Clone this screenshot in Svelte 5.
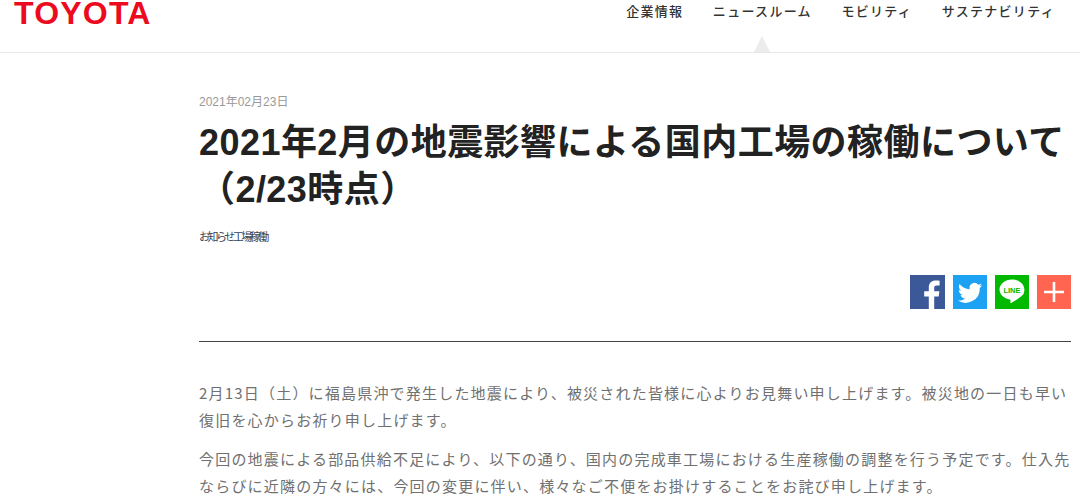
<script lang="ts">
  const nav = [
    { label: "企業情報" },
    { label: "ニュースルーム", active: true },
    { label: "モビリティ" },
    { label: "サステナビリティ" },
  ];
</script>

<header class="top">
  <div class="logo">TOYOTA</div>
  <nav>
    {#each nav as n}
      <a class:active={n.active} href="#top">{n.label}</a>
    {/each}
  </nav>
</header>

<main>
  <div class="date">2021年02月23日</div>
  <h1>2021年2月の地震影響による国内工場の稼働について（2/23時点）</h1>
  <div class="tags">お知らせ工場稼働</div>

  <div class="share">
    <span class="btn fb">
      <svg viewBox="0 0 35 35" width="35" height="35"><path fill="#fff" d="M24.2 35V21.6h4.5l.7-5.3h-5.200v-3.300c0-1.500.4-2.600 2.600-2.600h2.800V5.700c-.5-.1-2.100-.2-4-.2-4 0-6.800 2.500-6.800 7v3.800h-4.600v5.300h4.600V35z"/></svg>
    </span>
    <span class="btn tw">
      <svg viewBox="0 0 24 24" width="34" height="34"><path fill="#fff" d="M20.500 7.300c-.6.300-1.300.5-2 .6.700-.4 1.300-1.100 1.500-1.900-.7.400-1.400.7-2.200.8a3.500 3.500 0 0 0-6 3.200c-2.900-.1-5.500-1.500-7.200-3.700-.9 1.600-.5 3.600 1.100 4.700-.6 0-1.100-.2-1.600-.4 0 1.700 1.200 3.100 2.800 3.500-.5.100-1 .1-1.600 0 .4 1.400 1.700 2.400 3.300 2.400A7 7 0 0 1 3.500 18a10 10 0 0 0 15.400-8.900c.6-.5 1.200-1.100 1.600-1.800z"/></svg>
    </span>
    <span class="btn ln">
      <svg viewBox="0 0 34 34" width="34" height="34">
        <path fill="#fff" d="M17 4.500c-6.900 0-12.500 4.500-12.500 10.100 0 5 4.500 9.200 10.400 10 .9.200.5 1.600.4 2.500-.1.800.5 1 1.300.6 2.800-1.500 9.900-5.700 11.900-8.600.6-1.400.9-2.900.9-4.500 0-5.600-5.600-10.100-12.400-10.100z"/>
        <text x="17" y="17.500" text-anchor="middle" class="line-word">LINE</text>
      </svg>
    </span>
    <span class="btn plus">
      <svg viewBox="0 0 34 34" width="34" height="34"><path fill="none" stroke="#fff" stroke-width="2.600" d="M17 7v20M7 17h20"/></svg>
    </span>
  </div>

  <hr />

  <p>2月13日（土）に福島県沖で発生した地震により、被災された皆様に心よりお見舞い申し上げます。被災地の一日も早い復旧を心からお祈り申し上げます。</p>
  <p>今回の地震による部品供給不足により、以下の通り、国内の完成車工場における生産稼働の調整を行う予定です。仕入先ならびに近隣の方々には、今回の変更に伴い、様々なご不便をお掛けすることをお詫び申し上げます。</p>
</main>

<style>
  :global(body) {
    margin: 0;
    background: #fff;
    font-family: "Noto Sans CJK JP", "Liberation Sans", sans-serif;
    color: #222;
    overflow: hidden;
  }

  /* header */
  .top {
    position: relative;
    height: 52px;
    border-bottom: 1px solid #e8e8e8;
    display: flex;
    justify-content: space-between;
    align-items: flex-start;
    padding: 0 25px 0 14px;
  }
  .logo {
    font-family: "Liberation Sans", sans-serif;
    font-weight: 700;
    font-size: 32px;
    line-height: 26px;
    color: #eb0a1e;
    letter-spacing: 1.2px;
  }
  nav {
    display: flex;
    gap: 29.500px;
    padding-top: 2px;
  }
  nav a {
    position: relative;
    height: 50px;
    font-size: 13px;
    line-height: 18px;
    font-weight: 500;
    letter-spacing: 1.3px;
    color: #333;
    text-decoration: none;
  }
  nav a.active::after {
    content: "";
    position: absolute;
    left: 50%;
    bottom: 0;
    margin-left: -8px;
    border-left: 8px solid transparent;
    border-right: 8px solid transparent;
    border-bottom: 16px solid #ececec;
  }

  /* article */
  main {
    padding: 41px 9px 0 199px;
  }
  .date {
    font-size: 12px;
    line-height: 16px;
    color: #999;
    font-family: "Liberation Sans", "Noto Sans CJK JP", sans-serif;
  }
  h1 {
    margin: 9px 0 0;
    font-family: "Liberation Sans", "Noto Sans CJK JP", sans-serif;
    font-size: 36px;
    line-height: 47px;
    font-weight: 700;
    letter-spacing: 0.45px;
    color: #222;
  }
  .tags {
    margin-top: 15px;
    font-size: 11px;
    line-height: 16px;
    letter-spacing: -2.5px;
    color: #345;
  }
  .share {
    display: flex;
    justify-content: flex-end;
    gap: 8px;
    margin-top: 31px;
  }
  .btn {
    width: 34px;
    height: 34px;
    display: block;
    overflow: hidden;
  }
  .btn svg { display: block; }
  .fb { background: #3b5998; width: 35px; }
  .tw { background: #1da1f2; }
  .ln { background: #00b900; }
  .plus { background: #ff6550; }
  .line-word {
    font-family: "Liberation Sans", sans-serif;
    font-size: 7.500px;
    font-weight: 700;
    fill: #00b900;
  }
  hr {
    margin: 32px 0 0;
    border: 0;
    border-top: 1px solid #444;
  }
  p {
    margin: 0;
    font-size: 15px;
    line-height: 27px;
    color: #707070;
    letter-spacing: 1.2px;
  }
  hr + p { margin-top: 37px; }
  p + p { margin-top: 12px; }
</style>
